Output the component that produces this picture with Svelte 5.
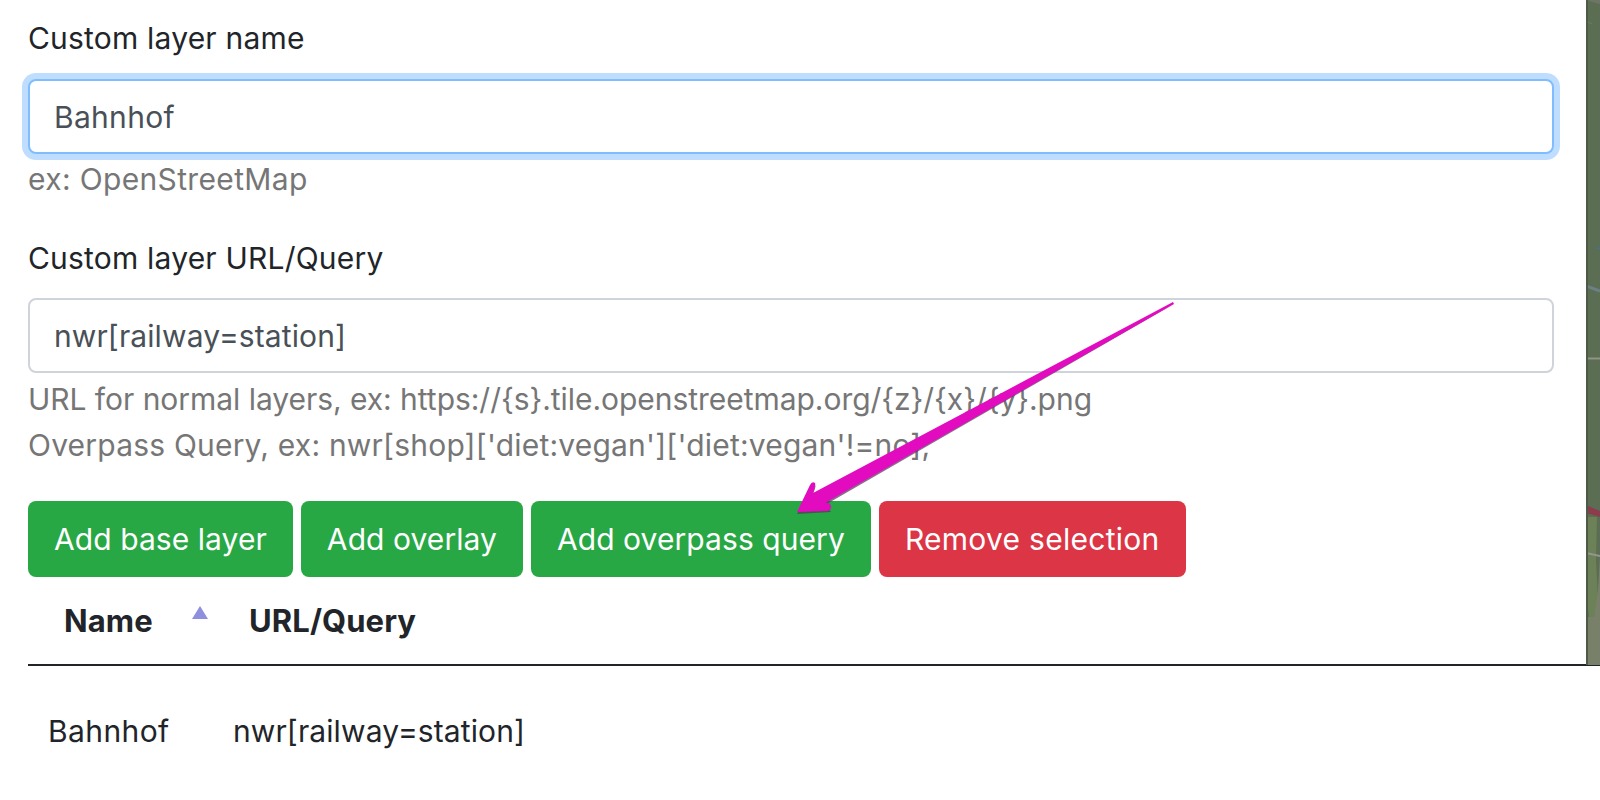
<script lang="ts">
  const buttons = [
    { label: 'Add base layer', cls: 'green' },
    { label: 'Add overlay', cls: 'green' },
    { label: 'Add overpass query', cls: 'green' },
    { label: 'Remove selection', cls: 'red' },
  ]
</script>

<div class="page">
  <div class="top">
    <div class="form">
      <label for="name">Custom layer name</label>
      <input id="name" class="focus" type="text" value="Bahnhof" />
      <small class="help example">ex: OpenStreetMap</small>

      <label class="second" for="url">Custom layer URL/Query</label>
      <input id="url" type="text" value="nwr[railway=station]" />
      <small class="help url">URL for normal layers, ex: https://&#123;s&#125;.tile.openstreetmap.org/&#123;z&#125;/&#123;x&#125;/&#123;y&#125;.png</small>
      <small class="help query">Overpass Query, ex: nwr[shop]['diet:vegan']['diet:vegan'!=no];</small>

      <div class="actions">
        {#each buttons as b}
          <button class={b.cls}>{b.label}</button>
        {/each}
      </div>

      <div class="thead">
        <span class="th name">Name <i class="sort"></i></span>
        <span class="th">URL/Query</span>
      </div>
    </div>
    <div class="map">
      <svg width="14" height="665" viewBox="0 0 14 665">
        <rect width="14" height="665" fill="#5b6d53" />
        <path d="M0 0 H14 V4 L6 2 Z" fill="#6f7566" />
        <path d="M0 21 L6 24" stroke="#6c7c63" stroke-width="1" fill="none" />
        <path d="M10 248.5 H14" stroke="#4a7186" stroke-width="2" fill="none" />
        <path d="M0 286 L14 291" stroke="#6d8088" stroke-width="3" fill="none" />
        <path d="M0 358.500 H14" stroke="#8f9587" stroke-width="2" fill="none" />
        <path d="M0 517 H11 L10 560 L12 600 L8 617 L3 617 L0 590 Z" fill="#6d8159" />
        <path d="M0 617 L3 617 L8 617 L12 590 L14 555 V665 H0 Z" fill="#78806a" />
        <path d="M0 505 L14 511 V517 L0 513 Z" fill="#8b3d4d" />
        <path d="M0 553 L14 556" stroke="#93968d" stroke-width="2" fill="none" />
        <rect width="2" height="665" fill="#4c5a46" />
      </svg>
    </div>
  </div>
  <div class="rule"></div>
  <div class="row">
    <span class="td name">Bahnhof</span>
    <span class="td">nwr[railway=station]</span>
  </div>

  <svg class="arrow" width="410" height="230" viewBox="0 0 410 230">
    <path d="M394 14 L33 205 L36 195 L17 224 L51 222 L45 215 Z" fill="#55305a" opacity="0.7" />
    <path d="M393 12 L33 203 Q36 195 35 193 Q32 191 30 195 L17 222 L47 221 Q52 220 51 216 Q50 212 45 213 L394 14 Z" fill="#e30bbf" />
  </svg>
</div>

<style>
  :global(body) {
    margin: 0;
    background: #fff;
  }

  .page {
    position: relative;
    width: 1600px;
    height: 800px;
    overflow: hidden;
    font-family: Inter, "Liberation Sans", sans-serif;
    font-size: 30px;
    color: #212529;
  }

  .top {
    display: flex;
    height: 664px;
  }

  .form {
    width: 1526px;
    margin-left: 28px;
    margin-right: 32px;
  }

  label {
    display: block;
    margin-top: 20px;
    line-height: 36px;
    letter-spacing: 0.2px;
  }

  label.second {
    margin-top: 38px;
  }

  input {
    display: block;
    box-sizing: border-box;
    width: 100%;
    height: 75px;
    margin-top: 22px;
    padding: 0 24px;
    border: 2px solid #ced4da;
    border-radius: 8px;
    font: inherit;
    letter-spacing: 0.1px;
    color: #495057;
    background: #fff;
    outline: none;
  }

  input.focus {
    margin-top: 23px;
    letter-spacing: 0.3px;
    border-color: #80bdff;
    box-shadow: 0 0 0 6px #bfdeff;
  }

  .help {
    display: block;
    font-size: 30px;
    line-height: 46px;
    color: #767676;
  }

  .example {
    margin-top: 2px;
    letter-spacing: 0.35px;
  }

  .url {
    margin-top: 3px;
    letter-spacing: -0.04px;
  }

  .query {
    letter-spacing: 0.2px;
  }

  .actions {
    display: flex;
    gap: 8px;
    margin-top: 33px;
  }

  button {
    height: 76px;
    padding: 0 26px;
    border: none;
    border-radius: 8px;
    font: inherit;
    color: #fff;
  }

  .green {
    background: #28a745;
    letter-spacing: 0.07px;
  }

  .red {
    background: #dc3545;
    letter-spacing: 0.28px;
  }

  .thead {
    display: flex;
    margin-top: 26px;
    padding-left: 36px;
    font-size: 31px;
    font-weight: 700;
    line-height: 36px;
    letter-spacing: 0.1px;
  }

  .th.name {
    position: relative;
    width: 185px;
  }

  .sort {
    position: absolute;
    left: 128px;
    top: 3px;
    width: 0;
    height: 0;
    border-left: 8px solid transparent;
    border-right: 8px solid transparent;
    border-bottom: 13px solid #8f8fe0;
  }

  .map {
    flex: none;
    width: 14px;
  }

  .map svg {
    display: block;
  }

  .rule {
    height: 2px;
    margin-left: 28px;
    background: #212529;
  }

  .row {
    display: flex;
    margin-top: 47px;
    padding-left: 48px;
    line-height: 36px;
  }

  .td.name {
    width: 185px;
    letter-spacing: 0.4px;
  }

  .td {
    letter-spacing: 0.1px;
  }

  .arrow {
    position: absolute;
    left: 780px;
    top: 290px;
  }
</style>
